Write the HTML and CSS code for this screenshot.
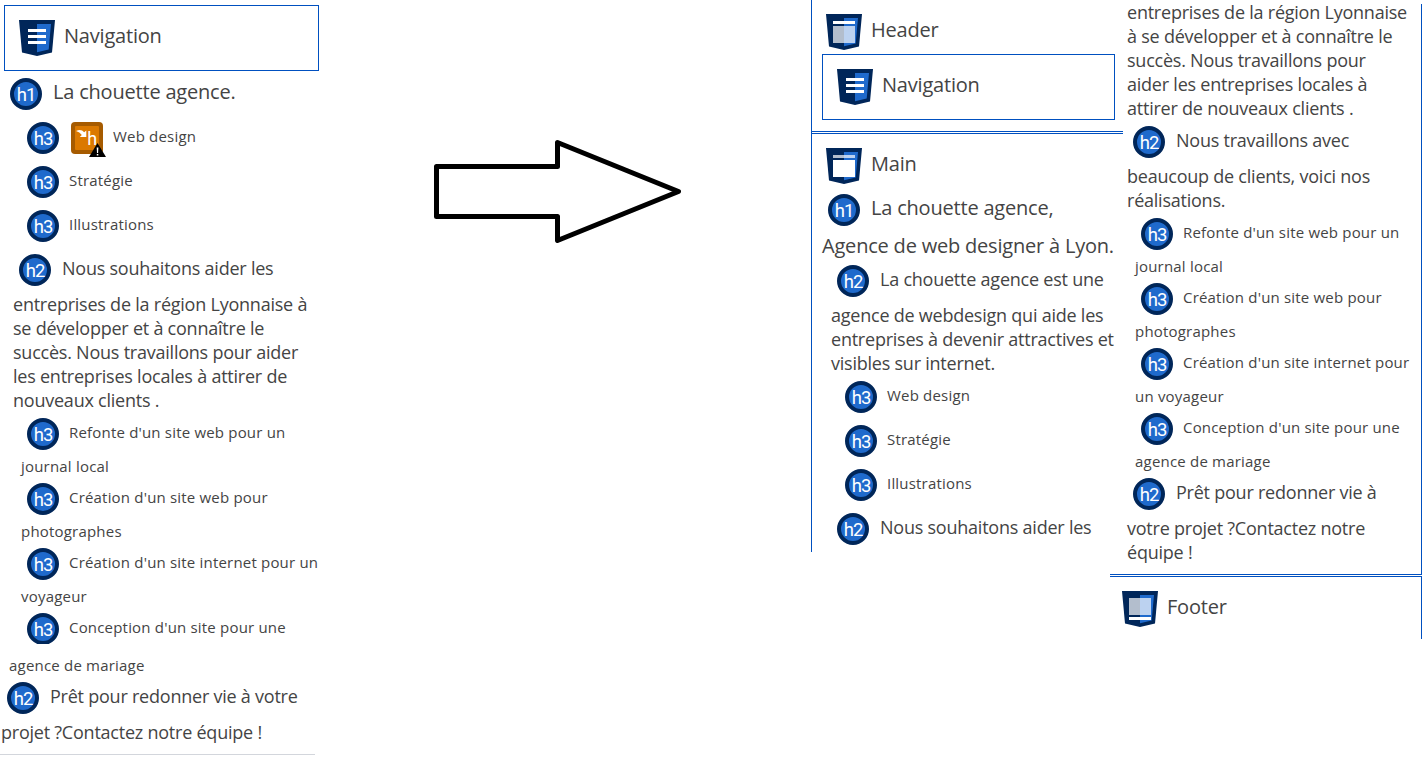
FILE: index.html
```html
<!DOCTYPE html>
<html lang="fr">
<head>
<meta charset="utf-8">
<title>Structure des titres</title>
<link rel="stylesheet" href="styles.css">
</head>
<body>
<svg class="defs" width="0" height="0">
  <symbol id="shield" viewBox="0 0 36 36">
    <path fill="#002659" d="M0 0H36L33 32.5L18 36L3 32.5Z"/>
    <path fill="#1f6acc" d="M18 4H32L29.7 29.5L18 32.2Z"/>
  </symbol>
  <symbol id="nav" viewBox="0 0 36 36">
    <use href="#shield"/>
    <path fill="#fff" d="M9 9H27V12H9ZM9 15H27V18H9ZM9 21H27V24H9Z"/>
  </symbol>
  <symbol id="header" viewBox="0 0 36 36">
    <use href="#shield"/>
    <path fill="#fff" d="M7 7H29V10H7Z"/><path fill="#fff" fill-opacity=".7" d="M7 12H29V29H7Z"/>
  </symbol>
  <symbol id="main" viewBox="0 0 36 36">
    <use href="#shield"/>
    <path fill="#fff" fill-opacity=".7" d="M7 7H29V10H7Z"/><path fill="#fff" d="M7 12H29V29H7Z"/>
  </symbol>
  <symbol id="footer" viewBox="0 0 36 36">
    <use href="#shield"/>
    <path fill="#fff" fill-opacity=".7" d="M7 7H29V24H7Z"/><path fill="#fff" d="M7 26H29V29H7Z"/>
  </symbol>
</svg>
<div class="page">
  <section class="before">
    <div class="navbox"><svg class="mark"><use href="#nav"/></svg><span class="big">Navigation</span></div>
    <div class="row r1"><span class="badge">h1</span><span class="big">La chouette agence.</span></div>
    <div class="row r3 spaced"><span class="badge">h3</span>
      <svg class="skip" viewBox="0 0 36 36">
        <rect width="32" height="32" rx="4" fill="#a65b00"/>
        <rect x="4" y="4" width="24" height="24" rx="1" fill="#db7900"/>
        <path fill="#fff" d="M5 9Q10 6.500 13.200 10.200L15.300 8.500V15H8.800L10.800 12.900Q8.800 10.300 5 9Z"/>
        <text x="16.300" y="23" class="skip-h">h</text>
        <path fill="#000" d="M26.500 21L35 35H18Z"/>
        <path fill="#fff" d="M25.700 25.500H27.400L27.100 31H26ZM25.800 32H27.300V33.500H25.800Z"/>
      </svg>
      <span class="small">Web design</span></div>
    <div class="row r3 spaced"><span class="badge">h3</span><span class="small">Stratégie</span></div>
    <div class="row r3 spaced"><span class="badge">h3</span><span class="small">Illustrations</span></div>
    <div class="row r2 spaced"><span class="badge">h2</span><span class="mid">Nous souhaitons aider les</span></div>
    <p class="rest2">entreprises de la région Lyonnaise à<br>se développer et à connaître le<br>succès. Nous travaillons pour aider<br>les entreprises locales à attirer de<br>nouveaux clients .</p>
    <div class="row r3"><span class="badge">h3</span><span class="small">Refonte d'un site web pour un</span></div>
    <p class="rest3">journal local</p>
    <div class="row r3"><span class="badge">h3</span><span class="small">Création d'un site web pour</span></div>
    <p class="rest3">photographes</p>
    <div class="row r3"><span class="badge">h3</span><span class="small">Création d'un site internet pour un</span></div>
    <p class="rest3">voyageur</p>
    <div class="row r3 cut"><span class="badge">h3</span><span class="small">Conception d'un site pour une</span></div>
    <div class="tail">
      <p class="rest3">agence de mariage</p>
      <div class="row r2"><span class="badge">h2</span><span class="mid">Prêt pour redonner vie à votre</span></div>
      <p class="rest2">projet ?Contactez notre équipe !</p>
    </div>
  </section>

  <svg class="arrow" viewBox="0 0 250 106"><path d="M4.500 27.500H125.500V3.500L246.500 52.500L125.500 101.500V77.500H4.500Z" fill="#fff" stroke="#000" stroke-width="5" stroke-linejoin="round"/></svg>

  <section class="after">
    <header class="head">
      <div class="title"><svg class="mark"><use href="#header"/></svg><span class="big">Header</span></div>
      <div class="navbox"><svg class="mark"><use href="#nav"/></svg><span class="big">Navigation</span></div>
    </header>
    <div class="body">
      <div class="title"><svg class="mark"><use href="#main"/></svg><span class="big">Main</span></div>
      <div class="row r1"><span class="badge">h1</span><span class="big">La chouette agence,</span></div>
      <p class="rest1">Agence de web designer à Lyon.</p>
      <div class="row r2"><span class="badge">h2</span><span class="mid">La chouette agence est une</span></div>
      <p class="rest2">agence de webdesign qui aide les<br>entreprises à devenir attractives et<br>visibles sur internet.</p>
      <div class="row r3"><span class="badge">h3</span><span class="small">Web design</span></div>
      <div class="row r3 spaced"><span class="badge">h3</span><span class="small">Stratégie</span></div>
      <div class="row r3 spaced"><span class="badge">h3</span><span class="small">Illustrations</span></div>
      <div class="row r2 spaced"><span class="badge">h2</span><span class="mid">Nous souhaitons aider les</span></div>
    </div>
  </section>

  <section class="more">
    <div class="body">
      <p class="rest2">entreprises de la région Lyonnaise<br>à se développer et à connaître le<br>succès. Nous travaillons pour<br>aider les entreprises locales à<br>attirer de nouveaux clients .</p>
      <div class="row r2"><span class="badge">h2</span><span class="mid">Nous travaillons avec</span></div>
      <p class="rest2">beaucoup de clients, voici nos<br>réalisations.</p>
      <div class="row r3"><span class="badge">h3</span><span class="small">Refonte d'un site web pour un</span></div>
      <p class="rest3">journal local</p>
      <div class="row r3"><span class="badge">h3</span><span class="small">Création d'un site web pour</span></div>
      <p class="rest3">photographes</p>
      <div class="row r3"><span class="badge">h3</span><span class="small">Création d'un site internet pour</span></div>
      <p class="rest3">un voyageur</p>
      <div class="row r3"><span class="badge">h3</span><span class="small">Conception d'un site pour une</span></div>
      <p class="rest3">agence de mariage</p>
      <div class="row r2"><span class="badge">h2</span><span class="mid">Prêt pour redonner vie à</span></div>
      <p class="rest2">votre projet ?Contactez notre<br>équipe !</p>
    </div>
    <footer class="foot"><svg class="mark"><use href="#footer"/></svg><span class="big">Footer</span></footer>
  </section>
</div>
</body>
</html>
```
FILE: styles.css
```css
* { box-sizing: border-box; }
body {
  margin: 0;
  background: #fff;
  color: #444;
  font-family: "Open Sans", "Noto Sans", sans-serif;
  white-space: nowrap;
}
p { margin: 0; }
.defs { display: block; }
.page { display: flex; align-items: flex-start; height: 778px; overflow: hidden; }

.before { width: 320px; padding-top: 5px; flex: none; }
.arrow { width: 250px; height: 106px; margin: 139px 0 0 112px; flex: none; }
.after { width: 312px; margin-left: 129px; flex: none; border-left: 1px solid #0050c0; height: 552px; }
.more { width: 312px; margin-left: -13px; flex: none; }

.big { font-size: 20px; line-height: 28px; letter-spacing: -0.2px; padding-bottom: 4px; }
.mid { font-size: 18px; line-height: 24px; letter-spacing: -0.23px; padding-bottom: 4px; }
.small { font-size: 15px; line-height: 24px; letter-spacing: 0.19px; padding-bottom: 5px; }

.mark { width: 36px; height: 36px; margin-right: 9px; flex: none; }
.navbox {
  display: flex;
  align-items: flex-start;
  height: 66px;
  padding: 14px;
  border: 1px solid #0050c0;
}
.navbox .big, .title .big, .foot .big { padding-top: 2px; }

.row { display: flex; align-items: center; height: 32px; }
.badge {
  width: 32px;
  height: 32px;
  border: 4px solid #002659;
  border-radius: 50%;
  background: #1f6acc;
  color: #fff;
  font: 400 18.5px/26px Roboto, sans-serif;
  text-align: center;
  letter-spacing: -1px;
  flex: none;
}
.r1 .badge, .r2 .badge { margin-right: 11px; }
.r3 .badge { margin-right: 10px; }
.spaced { margin-top: 12px; }
.rest1 { font-size: 20px; line-height: 27px; letter-spacing: -0.2px; padding: 6px 0; }
.rest2 { font-size: 18px; line-height: 24px; letter-spacing: -0.23px; padding: 6px 0; }
.rest3 { font-size: 15px; line-height: 24px; letter-spacing: 0.2px; padding: 4px 0 5px; }

.skip { width: 36px; height: 36px; margin: 4px 6px 0 2px; flex: none; }
.skip-h { font: 400 18px Roboto, sans-serif; fill: #fff; }

.before .navbox { width: 315px; margin-left: 4px; }
.before .r1 { margin: 7px 0 0 10px; }
.before .r2 { margin-left: 19px; }
.before .r3 { margin-left: 27px; }
.before .rest2 { padding-left: 13px; }
.before .rest3 { padding-left: 21px; }
.before .cut { height: 31px; overflow: hidden; align-items: flex-start; }
.cut .small { padding-top: 2px; }
.before .tail { width: 315px; height: 111px; border-bottom: 1px solid #d3d6dc; }
.before .tail .rest3 { padding: 9px 0 5px 9px; }
.before .tail .r2 { margin-left: 7px; }
.before .tail .rest2 { padding-left: 1px; }

.head { height: 132px; padding: 14px 8px 0 10px; border-bottom: 1px solid #0050c0; }
.title { display: flex; align-items: flex-start; height: 40px; margin-left: 4px; }
.after .body { margin-top: 1px; padding: 14px 0 0 10px; border-top: 1px solid #0050c0; }
.after .body .title { height: 46px; }
.after .r1 { margin-left: 6px; }
.after .r2 { margin-left: 15px; }
.after .r3 { margin-left: 23px; }
.after .rest2 { padding-left: 9px; }

.more .body {
  height: 575px;
  border-bottom: 1px solid #0050c0;
  background: linear-gradient(#0050c0, #0050c0) right 4px / 1px 100% no-repeat;
}
.more .body > :first-child { padding-top: 0; }
.more .r2 { margin-left: 23px; }
.more .r3 { margin-left: 31px; }
.more .rest2 { padding-left: 17px; }
.more .rest3 { padding-left: 25px; }
.foot {
  display: flex;
  align-items: flex-start;
  height: 63px;
  margin-top: 1px;
  padding: 14px 0 0 12px;
  border: solid #0050c0;
  border-width: 1px 1px 0 0;
}
```
